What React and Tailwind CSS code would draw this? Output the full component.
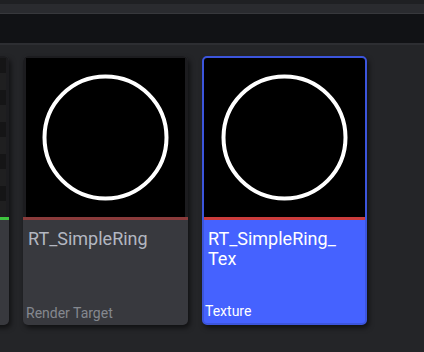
import React from 'react';

const Ring = () => (
  <svg viewBox="0 0 159 159" className="w-full h-full block">
    <circle cx="79.5" cy="79.5" r="61" fill="none" stroke="#ffffff" strokeWidth="4" />
  </svg>
);

const GridThumb = () => (
  <svg viewBox="0 0 159 159" className="w-full h-full block">
    <rect width="159" height="159" fill="#1f1f20" />
    {[0, 32, 64, 96, 128].map((y) => (
      <rect key={y} x="143" y={y} width="16" height="15" fill="#151516" />
    ))}
  </svg>
);

const AssetCard = ({ title, type, barColor, selected, thumb }) => (
  <div
    className={
      'w-[165px] h-[269px] shrink-0 flex flex-col rounded-[5px] overflow-hidden shadow-[2px_3px_5px_rgba(0,0,0,0.55)] ' +
      (selected ? 'bg-[#4562ff] border-2 border-[#3c55dc]' : 'bg-[#38393e]')
    }
  >
    <div className={selected ? 'h-[159px] bg-black' : 'h-[161px] bg-[#1c1c1f] pt-[2px] px-[3px]'}>
      <div className="w-full h-full bg-black">{thumb}</div>
    </div>
    <div className="h-[3px]" style={{ backgroundColor: barColor }} />
    <div className={'flex-1 flex flex-col justify-between pb-[4px] ' + (selected ? 'pt-[9px]' : 'pt-[9px]')}>
      <div
        className={
          'text-[18px] leading-[20px] break-all ' +
          (selected ? 'pl-[4px] pr-[20px] text-white' : 'pl-[5px] text-[#b3b7c1]')
        }
      >
        {title}
      </div>
      <div
        className={
          'text-[14px] leading-[16px] ' + (selected ? 'pl-[1px] text-white' : 'pl-[3px] text-[#85888f]')
        }
      >
        {type}
      </div>
    </div>
  </div>
);

export default function App() {
  return (
    <div
      className="w-[424px] h-[352px] bg-[#242528] overflow-hidden flex flex-col"
      style={{ fontFamily: 'Roboto, "Liberation Sans", sans-serif' }}
    >
      <div className="h-[4px] bg-[#1f2023]" />
      <div className="h-[9px] bg-[#2a2b2f]" />
      <div className="h-[1px] bg-[#37383c]" />
      <div className="h-[29px] bg-[#111215]" />
      <div className="h-[2px] bg-[#2d2e32]" />
      <div className="flex gap-[14px] ml-[-156px] pt-[11px]">
        <AssetCard title="" type="" barColor="#3ec43f" thumb={<GridThumb />} />
        <AssetCard title="RT_SimpleRing" type="Render Target" barColor="#8a3b3b" thumb={<Ring />} />
        <AssetCard
          title="RT_SimpleRing_ Tex"
          type="Texture"
          barColor="#cc3d3d"
          selected
          thumb={<Ring />}
        />
      </div>
    </div>
  );
}
